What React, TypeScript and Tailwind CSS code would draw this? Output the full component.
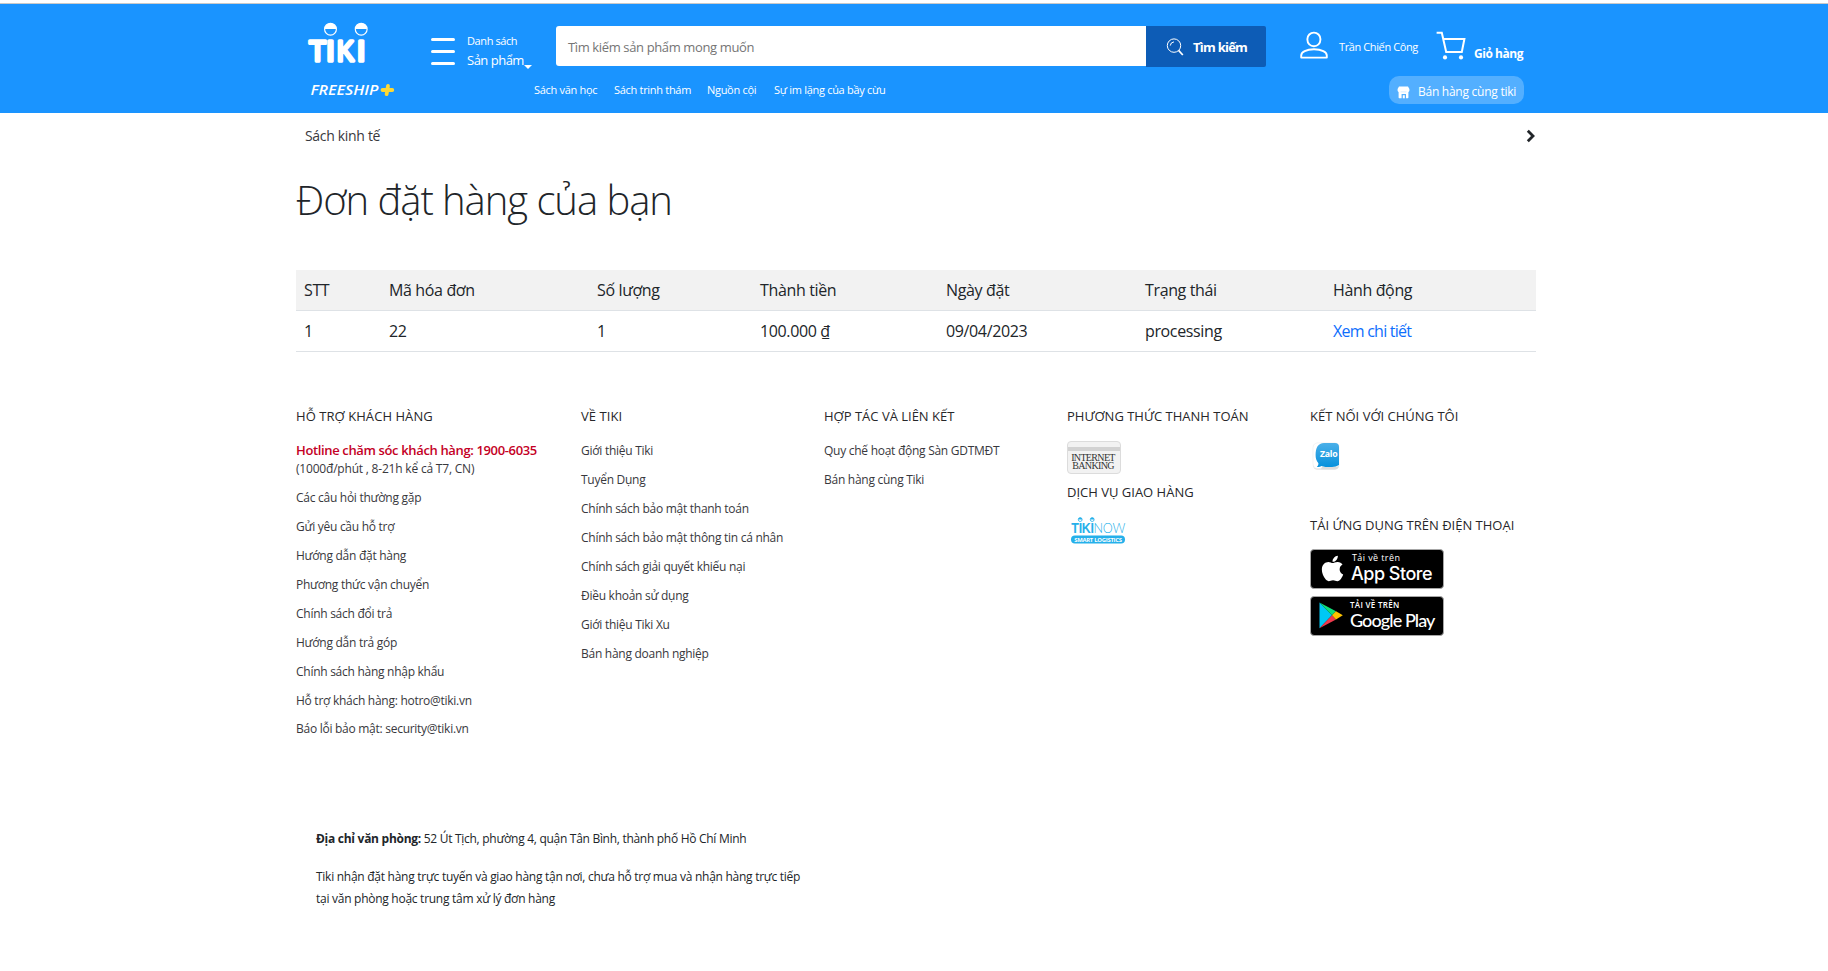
import type { ReactNode } from "react";
import { FaApple } from "react-icons/fa";

const quickLinks = [
  { label: "Sách văn học", width: "w-[80px]" },
  { label: "Sách trinh thám", width: "w-[93px]" },
  { label: "Nguồn cội", width: "w-[67px]" },
  { label: "Sự im lặng của bầy cừu", width: "w-[130px]" },
];

const columns = [
  { label: "STT", width: "w-[85px]" },
  { label: "Mã hóa đơn", width: "w-[208px]" },
  { label: "Số lượng", width: "w-[163px]" },
  { label: "Thành tiền", width: "w-[186px]" },
  { label: "Ngày đặt", width: "w-[199px]" },
  { label: "Trạng thái", width: "w-[188px]" },
  { label: "Hành động", width: "w-[211px]" },
];

const orders = [["1", "22", "1", "100.000 ₫", "09/04/2023", "processing"]];

const supportLinks = [
  "Các câu hỏi thường gặp",
  "Gửi yêu cầu hỗ trợ",
  "Hướng dẫn đặt hàng",
  "Phương thức vận chuyển",
  "Chính sách đổi trả",
  "Hướng dẫn trả góp",
  "Chính sách hàng nhập khẩu",
  "Hỗ trợ khách hàng: hotro@tiki.vn",
];

const aboutLinks = [
  "Giới thiệu Tiki",
  "Tuyển Dụng",
  "Chính sách bảo mật thanh toán",
  "Chính sách bảo mật thông tin cá nhân",
  "Chính sách giải quyết khiếu nại",
  "Điều khoản sử dụng",
  "Giới thiệu Tiki Xu",
  "Bán hàng doanh nghiệp",
];

const partnerLinks = ["Quy chế hoạt động Sàn GDTMĐT", "Bán hàng cùng Tiki"];

function TikiLogo() {
  return (
    <svg className="mt-[18px] h-[42px] w-[60px] shrink-0 overflow-visible" viewBox="0 0 60 42" fill="#fff">
      <g fontFamily="Liberation Sans, sans-serif" fontSize="30" stroke="#fff" strokeWidth="3.6" strokeLinejoin="round">
        <text x="0.9" y="39.2" textLength="17" lengthAdjust="spacingAndGlyphs">T</text>
        <text x="18.3" y="39.2">I</text>
        <text x="29" y="39.2" textLength="17" lengthAdjust="spacingAndGlyphs">K</text>
        <text x="48.9" y="39.2">I</text>
      </g>
      <g fill="#1a94ff" stroke="#fff" strokeWidth="1.2">
        <circle cx="22.5" cy="7.2" r="5.9" />
        <circle cx="53.2" cy="7.2" r="5.9" />
      </g>
      <path d="M16.7 7a5.8 5.8 0 0 1 11.6 0zM47.4 7a5.8 5.8 0 0 1 11.6 0z" />
    </svg>
  );
}

function Freeship() {
  return (
    <div className="ml-[2px] flex w-[224px] shrink-0 pt-[5px]">
      <svg className="h-[20px] w-[86px] overflow-visible" viewBox="0 0 86 20">
        <text x="0.5" y="14.3" fontFamily="Open Sans, sans-serif" fontSize="13.5" fontWeight="600" fontStyle="italic" fill="#fff" textLength="68" lengthAdjust="spacingAndGlyphs">FREESHIP</text>
        <path d="M78 4.8 76.6 13.2M72.500 9h9.800" stroke="#fdd835" strokeWidth="3.8" strokeLinecap="round" />
      </svg>
    </div>
  );
}

function SearchIcon() {
  return (
    <svg className="size-[18px]" viewBox="0 0 18 18" fill="none" stroke="#fff" strokeWidth="1">
      <circle cx="8" cy="7.6" r="6.7" />
      <path d="M4.3 7.2A3.7 3.7 0 0 1 7.6 3.9" strokeLinecap="round" />
      <path d="m12.6 12.4 4.2 4.6" strokeWidth="1.7" />
    </svg>
  );
}

function UserIcon() {
  return (
    <svg className="mt-[27px] h-[29px] w-[28px] shrink-0" viewBox="0 0 28 29" fill="none" stroke="#fff" strokeWidth="1.9">
      <rect x="7.4" y="1.6" width="13" height="13.6" rx="6.4" />
      <path d="M1.2 26.6v-2.2c0-3.4 5-6.1 12.8-6.1s12.8 2.7 12.8 6.1v2.2z" strokeLinejoin="round" />
    </svg>
  );
}

function CartIcon() {
  return (
    <svg className="mt-[27px] h-[30px] w-[31px] shrink-0" viewBox="0 0 31 30" fill="none" stroke="#fff" strokeWidth="2">
      <path d="M.6 1.7h5.2l4.4 19.3h15.6L28.4 7.9H7.4" />
      <circle cx="9" cy="26.4" r="2.1" fill="#fff" stroke="none" />
      <circle cx="25" cy="26.4" r="2.1" fill="#fff" stroke="none" />
    </svg>
  );
}

function StoreIcon() {
  return (
    <svg className="h-[13px] w-[13px]" viewBox="0 0 13 13">
      <path d="M2 .4h9L12.4 3v1.8A1.8 1.8 0 0 1 11.4 6v5.6a.7.7 0 0 1-.7.7H9V8H4.6v4.3H2.3a.7.7 0 0 1-.7-.7V6A1.8 1.8 0 0 1 .6 4.8V3z" fill="#fff" />
      <path d="M5.8 12.3V9.2h2v3.1z" fill="#fff" />
      <path d="M3.6 5.9h5.8" stroke="#b9defe" strokeWidth=".6" />
    </svg>
  );
}

function TikiNowLogo() {
  return (
    <svg className="ml-[4px] h-[27px] w-[55px] overflow-visible" viewBox="0 0 55 27" fill="#25b0ea">
      <text x="0.3" y="15.8" fontFamily="Liberation Sans, sans-serif" fontSize="14" fontWeight="700" textLength="22.5" lengthAdjust="spacingAndGlyphs">TIKI</text>
      <text x="22.6" y="15.8" fontFamily="Lato, sans-serif" fontSize="14" fontWeight="300" textLength="31.5" lengthAdjust="spacingAndGlyphs">NOW</text>
      <g fill="#fff" stroke="#25b0ea" strokeWidth=".8">
        <circle cx="9.2" cy="2.6" r="1.9" />
        <circle cx="21.2" cy="2.6" r="1.9" />
      </g>
      <path d="M7.2 2.6a2 2 0 0 1 4 0zM19.2 2.6a2 2 0 0 1 4 0z" />
      <rect x="0" y="18.6" width="54" height="7.8" rx="3.9" />
      <text x="3.2" y="24.7" fontFamily="Open Sans, sans-serif" fontSize="6" fontWeight="700" fill="#fff" textLength="47.5" lengthAdjust="spacingAndGlyphs">SMART LOGISTICS</text>
    </svg>
  );
}

function ZaloLogo() {
  return (
    <svg className="mt-[16px] ml-[2px] h-[29px] w-[29px]" viewBox="0 0 29 29">
      <defs>
        <linearGradient id="zalo" x1="0" y1="0" x2="0" y2="1">
          <stop offset="0" stopColor="#4aafe8" />
          <stop offset="1" stopColor="#0791dc" />
        </linearGradient>
      </defs>
      <rect x="1" y="1.2" width="26" height="26.6" rx="4.5" fill="#e3e3e3" />
      <rect x="1" y=".9" width="26" height="25.6" rx="4.5" fill="#fff" stroke="#ececec" strokeWidth=".6" />
      <path d="M10 24.6h17v-.8c-.2 2-1.7 3.5-4 3.5H9z" fill="#dcdcdc" />
      <path d="M12 1.1h11a4 4 0 0 1 4 4v18c-2 1.4-4.6 1.8-7 1.8h-6.5c-1.5 0-2.7-.3-4-.8-1.5.9-3 1.1-4.6.8 1.1-1 1.6-2.2 1.5-3.6C4.2 18.8 3.6 15.9 3.6 13 3.6 6 6 1.1 12 1.1z" fill="url(#zalo)" />
      <text x="8" y="14.8" fontFamily="Open Sans, sans-serif" fontSize="9" fontWeight="700" fill="#fff" textLength="17.4" lengthAdjust="spacingAndGlyphs">Zalo</text>
    </svg>
  );
}

function PlayIcon() {
  return (
    <svg className="h-[27px] w-[24px]" viewBox="0 0 24 27">
      <path d="M.5.6 13 13.3.5 26.3z" fill="#00c8f5" />
      <path d="M.5.6 17 9.3l-4 4z" fill="#0fe07a" />
      <path d="M.5 26.3 17 17.5l-4-4.2z" fill="#ee3a4d" />
      <path d="m17 9.3 6.8 4-6.8 4.2-4-4.2z" fill="#ffc400" />
    </svg>
  );
}

const heading = "text-[13px] leading-5 font-medium whitespace-nowrap text-[#27272a]";

function LinkList({ items }: { items: string[] }) {
  return (
    <ul className="flex flex-col gap-[11px]">
      {items.map((item) => (
        <li key={item} className="whitespace-nowrap">{item}</li>
      ))}
    </ul>
  );
}

function Header() {
  return (
    <header className="h-[110px] border-t border-[#c9c9c9] bg-[#1a94ff] pl-[308px] text-white">
      <div className="flex h-[72px] items-start">
        <TikiLogo />
        <div className="mt-[34px] ml-[63px] flex w-[24px] shrink-0 flex-col gap-[9px]">
          <span className="h-[3px] rounded-full bg-white" />
          <span className="h-[3px] rounded-full bg-white" />
          <span className="h-[3px] rounded-full bg-white" />
        </div>
        <div className="ml-[12px] w-[89px] shrink-0 pt-[29px] whitespace-nowrap">
          <div className="text-[11px] leading-4 tracking-[-0.4px]">Danh sách</div>
          <div className="mt-px flex text-[13px] leading-5 tracking-[-0.5px]">
            Sản phẩm
            <span className="mt-[15px] h-0 border-x-4 border-t-4 border-x-transparent border-t-white" />
          </div>
        </div>
        <div className="mt-[22px] flex h-[40px] w-[590px] shrink-0 items-center rounded-l-[3px] bg-white pt-[4px] pl-[12px] text-[13px] tracking-[-0.37px] text-[#757575]">
          Tìm kiếm sản phẩm mong muốn
        </div>
        <button className="mt-[22px] flex h-[41px] w-[120px] shrink-0 items-center rounded-r-[2px] bg-[#0d5cb6] pl-[20px] text-[13px] font-bold tracking-[-0.75px]">
          <SearchIcon />
          <span className="ml-[9px] pt-[3px]">Tìm kiếm</span>
        </button>
        <div className="ml-[34px]"><UserIcon /></div>
        <div className="mt-[35px] ml-[11px] w-[97px] shrink-0 text-[11px] leading-4 tracking-[-0.39px] whitespace-nowrap">Trần Chiến Công</div>
        <CartIcon />
        <div className="mt-[42px] ml-[7px] text-[12px] leading-4 font-bold tracking-[-0.45px] whitespace-nowrap">Giỏ hàng</div>
      </div>
      <div className="flex items-start">
        <Freeship />
        <nav className="flex w-[855px] shrink-0 pt-[6px] text-[11px] leading-4 tracking-[-0.3px] whitespace-nowrap">
          {quickLinks.map((link) => (
            <a key={link.label} className={link.width}>{link.label}</a>
          ))}
        </nav>
        <button className="flex h-[28px] w-[135px] shrink-0 items-center rounded-[10px] bg-[#53afff] pt-[4px] pl-[8px] text-[12px] tracking-[-0.26px] whitespace-nowrap">
          <StoreIcon />
          <span className="ml-[8px]">Bán hàng cùng tiki</span>
        </button>
      </div>
    </header>
  );
}

function StoreBadge({ icon, small, large, smallClass, largeClass }: { icon: ReactNode; small: string; large: string; smallClass: string; largeClass: string }) {
  return (
    <div className="flex h-[40px] w-[134px] overflow-hidden rounded-[4px] border border-[#a6a6a6] bg-black text-white">
      <div className="flex w-[40px] shrink-0 items-center justify-center">{icon}</div>
      <div className="whitespace-nowrap">
        <div className={smallClass}>{small}</div>
        <div className={largeClass}>{large}</div>
      </div>
    </div>
  );
}

function OrdersTable() {
  return (
    <table className="mt-[46px] w-[1240px] table-fixed border-collapse text-left text-[16px] tracking-[-0.36px] text-[#212529]">
      <thead>
        <tr className="h-[40px] border-b border-[#dee2e6] bg-[#f2f2f2]">
          {columns.map((column) => (
            <th key={column.label} className={`${column.width} px-2 pt-px font-normal`}>{column.label}</th>
          ))}
        </tr>
      </thead>
      <tbody>
        {orders.map((order) => (
          <tr key={order[1]} className="h-[41px] border-b border-[#dee2e6]">
            {order.map((cell, index) => (
              <td key={index} className="px-2">{cell}</td>
            ))}
            <td className="px-2 tracking-[-0.75px] text-[#0d6efd]">Xem chi tiết</td>
          </tr>
        ))}
      </tbody>
    </table>
  );
}

function Footer() {
  return (
    <footer>
      <div className="mt-[54px] flex items-start text-[12px] leading-[18px] tracking-[-0.27px] text-[#38383d]">
        <section className="w-[285px]">
          <h4 className={`${heading} tracking-[0.06px]`}>HỖ TRỢ KHÁCH HÀNG</h4>
          <p className="mt-[15px] text-[13px] font-semibold tracking-[-0.36px] whitespace-nowrap text-[#c40025]">Hotline chăm sóc khách hàng: 1900-6035</p>
          <p className="mt-px mb-[11px] tracking-[-0.2px]">(1000đ/phút , 8-21h kể cả T7, CN)</p>
          <LinkList items={supportLinks} />
          <p className="mt-[10px]">Báo lỗi bảo mật: security@tiki.vn</p>
        </section>
        <section className="w-[243px]">
          <h4 className={`${heading} mb-[16px] tracking-[0.06px]`}>VỀ TIKI</h4>
          <LinkList items={aboutLinks} />
        </section>
        <section className="w-[243px]">
          <h4 className={`${heading} mb-[16px] tracking-normal`}>HỢP TÁC VÀ LIÊN KẾT</h4>
          <LinkList items={partnerLinks} />
        </section>
        <section className="w-[243px]">
          <h4 className={`${heading} tracking-normal`}>PHƯƠNG THỨC THANH TOÁN</h4>
          <div className="mt-[15px] h-[33px] w-[54px] rounded-[4px] border border-[#dcdcdc] bg-[#f2f2f2] pt-[5px]">
            <div className="h-[4px] bg-[#d2d2d2]" />
            <div className="mt-[3px] pr-[2px] text-center font-['Liberation_Serif',serif] text-[10px] leading-[8px] tracking-[-0.65px] text-[#333]">
              INTERNET
              <br />
              BANKING
            </div>
          </div>
          <h4 className={`${heading} mt-[8px] mb-[15px] tracking-normal`}>DỊCH VỤ GIAO HÀNG</h4>
          <TikiNowLogo />
        </section>
        <section className="w-[226px]">
          <h4 className={`${heading} tracking-normal`}>KẾT NỐI VỚI CHÚNG TÔI</h4>
          <ZaloLogo />
          <h4 className={`${heading} mt-[44px] mb-[14px] tracking-normal`}>TẢI ỨNG DỤNG TRÊN ĐIỆN THOẠI</h4>
          <div className="flex flex-col gap-[7px]">
            <StoreBadge
              icon={<FaApple className="mt-[-1px] ml-[2px] size-[29px]" />}
              small="Tải về trên"
              large="App Store"
              smallClass="mt-[2px] ml-px text-[9px] leading-[12px] font-medium tracking-[0.4px]"
              largeClass="font-['Inter',sans-serif] text-[18px] leading-[20px] font-medium tracking-[-0.5px]"
            />
            <StoreBadge
              icon={<PlayIcon />}
              small="TẢI VỀ TRÊN"
              large="Google Play"
              smallClass="mt-[2px] ml-[-1px] text-[8px] leading-[12px] font-semibold tracking-[0.3px]"
              largeClass="ml-[-1px] font-['Lato',sans-serif] text-[18px] leading-[19px] font-medium tracking-[-0.9px]"
            />
          </div>
        </section>
      </div>
      <div className="mt-[92px] ml-[20px] text-[12px] tracking-[-0.29px] text-[#212529]">
        <p className="leading-[18px]">
          <strong className="tracking-[-0.27px]">Địa chỉ văn phòng:</strong> 52 Út Tịch, phường 4, quận Tân Bình, thành phố Hồ Chí Minh
        </p>
        <p className="mt-[18px] leading-[22px] tracking-[-0.27px]">
          Tiki nhận đặt hàng trực tuyến và giao hàng tận nơi, chưa hỗ trợ mua và nhận hàng trực tiếp
          <br />
          tại văn phòng hoặc trung tâm xử lý đơn hàng
        </p>
      </div>
    </footer>
  );
}

export default function App() {
  return (
    <div className="h-[971px] overflow-hidden bg-white pt-[3px] font-['Open_Sans',sans-serif]">
      <Header />
      <main className="ml-[296px] w-[1240px]">
        <div className="flex h-[34px] items-start justify-between pt-[13px] pl-[9px]">
          <span className="text-[14px] leading-5 tracking-[-0.32px] text-[#38383d]">Sách kinh tế</span>
          <svg className="mt-[3px] h-[14px] w-[10px]" viewBox="0 0 10 14" fill="none" stroke="#212529" strokeWidth="2.8">
            <path d="m1.8 1.8 5.2 5.2-5.2 5.2" />
          </svg>
        </div>
        <h1 className="mt-[29px] text-[40px] leading-[48px] font-light tracking-[-1.05px] text-[#212529]">Đơn đặt hàng của bạn</h1>
        <OrdersTable />
        <Footer />
      </main>
    </div>
  );
}
